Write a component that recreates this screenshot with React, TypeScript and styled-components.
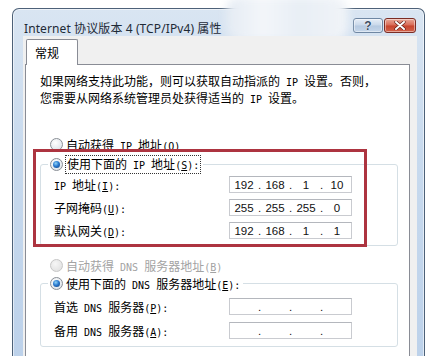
import React from "react";
import styled, { createGlobalStyle } from "styled-components";

const Global = createGlobalStyle`
  html, body { margin: 0; padding: 0; background: #ffffff; }
  body { font-family: "Noto Sans CJK SC", "Noto Sans", sans-serif; overflow: hidden; }
`;

const Stage = styled.div`
  position: relative;
  width: 433px;
  height: 356px;
  overflow: hidden;
  padding-top: 8px;
  padding-left: 12px;
  box-sizing: border-box;
`;

const Window = styled.div`
  position: relative;
  width: 413px;
  height: 360px;
  box-sizing: border-box;
  border: 1px solid #4d6178;
  border-bottom: none;
  border-radius: 7px 7px 0 0;
  background: linear-gradient(180deg, #d9e5f2 0%, #c8daee 40%, #bcd1ea 100%);
  display: flex;
  flex-direction: column;
  box-shadow: inset 0 0 0 1px rgba(255, 255, 255, 0.55);
`;

const TitleBar = styled.div`
  height: 27px;
  display: flex;
  align-items: center;
  padding-left: 11px;
  padding-right: 8px;
  flex: none;
`;

const Title = styled.div`
  flex: 1;
  font-family: "Noto Sans", "Noto Sans CJK SC", sans-serif;
  font-size: 12px;
  color: #1e2a36;
  margin-top: 10px;
  letter-spacing: 0.1px;
  position: relative;
  z-index: 1;
`;

const Blur = styled.div`
  position: absolute;
  left: 213px;
  top: -12px;
  width: 122px;
  height: 44px;
  border-radius: 14px;
  background: linear-gradient(90deg, #e4ebf3 0%, #f3f6fa 30%, #e8eef5 60%, #f1f4f8 100%);
  filter: blur(4px);
  pointer-events: none;
  z-index: 2;
`;

const Buttons = styled.div`
  display: flex;
  gap: 1px;
  align-self: flex-start;
  margin-top: 9px;
`;

const CapButton = styled.div<{ $close?: boolean }>`
  width: ${(p) => (p.$close ? 32 : 30)}px;
  height: 15px;
  box-sizing: border-box;
  border-radius: 3px;
  border: 1px solid ${(p) => (p.$close ? "#7b2d25" : "#6f87a3")};
  background: ${(p) =>
    p.$close
      ? "linear-gradient(180deg, #e9a898 0%, #d86a55 48%, #c7442d 52%, #d2624a 100%)"
      : "linear-gradient(180deg, #e6eef7 0%, #c9d8ea 48%, #b5c9e0 52%, #c5d6ea 100%)"};
  display: flex;
  align-items: center;
  justify-content: center;
  box-shadow: inset 0 0 0 1px rgba(255, 255, 255, 0.45);
`;

const Help = styled.span`
  font-family: "Liberation Sans", sans-serif;
  font-weight: bold;
  font-size: 12px;
  line-height: 12px;
  color: #3b4d63;
  text-shadow: 0 0 1px #fff, 0 0 1px #fff;
`;

const Client = styled.div`
  flex: 1;
  margin: 0 7px 0 10px;
  background: #f0f0f0;
  padding-top: 3px;
  display: flex;
  flex-direction: column;
  position: relative;
  z-index: 3;
`;

const TabStrip = styled.div`
  display: flex;
  padding-left: 3px;
  position: relative;
  z-index: 1;
`;

const Tab = styled.div`
  width: 52px;
  height: 26px;
  box-sizing: border-box;
  border: 1px solid #898c95;
  border-bottom: none;
  background: #ffffff;
  font-size: 12px;
  color: #000;
  padding-left: 8px;
  display: flex;
  align-items: center;
  border-radius: 2px 2px 0 0;
`;

const Page = styled.div`
  position: relative;
  flex: 1;
  margin: -1px 7px 0 2px;
  border: 1px solid #898c95;
  border-bottom: none;
  background: #ffffff;
  display: flex;
  flex-direction: column;
  font-size: 12px;
  color: #000;
`;

const Para = styled.p`
  margin: 8px 0 0 14px;
  line-height: 15px;
  font-size: 12px;
`;

const L = styled.span`
  font-family: "DejaVu Sans Mono", "Liberation Mono", monospace;
  font-size: 10px;
`;

const RadioRow = styled.div<{ $disabled?: boolean; $mt: number }>`
  display: flex;
  align-items: center;
  height: 16px;
  margin-top: ${(p) => p.$mt}px;
  padding-left: 24px;
  gap: 3px;
  color: ${(p) => (p.$disabled ? "#a3a3a3" : "#000")};
  white-space: nowrap;
`;

const Radio = styled.span<{ $checked?: boolean; $disabled?: boolean }>`
  width: 13px;
  height: 13px;
  box-sizing: border-box;
  border-radius: 50%;
  border: 1px solid ${(p) => (p.$disabled ? "#c6c6c6" : "#8a8f96")};
  background: ${(p) =>
    p.$disabled
      ? "radial-gradient(circle at 40% 35%, #f6f6f6, #dcdcdc)"
      : "radial-gradient(circle at 40% 35%, #ffffff, #d6dde5)"};
  display: flex;
  align-items: center;
  justify-content: center;
  flex: none;
  &::after {
    content: "";
    display: ${(p) => (p.$checked ? "block" : "none")};
    width: 7px;
    height: 7px;
    border-radius: 50%;
    background: radial-gradient(circle at 40% 35%, #8fd3f7 0%, #2a7ad0 45%, #0d3d7a 100%);
  }
`;

const Focus = styled.span`
  outline: 1px dotted #333;
  padding: 0 1px;
  line-height: 15px;
`;

const Group = styled.fieldset<{ $mt: number; $pt: number; $pb: number; $gap: number }>`
  margin: ${(p) => p.$mt}px 0 0 14px;
  width: 358px;
  box-sizing: border-box;
  border: 1px solid #d5dfe5;
  border-radius: 3px;
  padding: ${(p) => p.$pt}px 0 ${(p) => p.$pb}px 13px;
  display: flex;
  flex-direction: column;
  gap: ${(p) => p.$gap}px;
  min-width: 0;
`;

const Legend = styled.legend`
  margin-left: -6px;
  padding: 0 3px 0 2px;
  height: 16px;
  display: flex;
  align-items: center;
  gap: 3px;
  white-space: nowrap;
`;

const FieldRow = styled.div`
  display: grid;
  grid-template-columns: 175px 123px;
  align-items: center;
  height: 17px;
`;

const Label = styled.span`
  white-space: nowrap;
`;

const U = styled.span`
  text-decoration: underline;
  text-underline-offset: 1px;
`;

const IpBox = styled.div`
  height: 17px;
  box-sizing: border-box;
  border: 1px solid #c9cbd0;
  border-top-color: #b4b7bd;
  background: #fff;
  display: flex;
  align-items: center;
  padding-left: 2px;
  font-family: "Liberation Sans", sans-serif;
  font-size: 11.5px;
  color: #111;
`;

const Seg = styled.span`
  width: 24px;
  text-align: center;
`;

const Dot = styled.span`
  width: 7px;
  text-align: center;
`;

const RedBox = styled.div`
  position: absolute;
  left: 7px;
  top: 84px;
  width: 334px;
  height: 98px;
  box-sizing: border-box;
  border: 3px solid #ad3440;
  pointer-events: none;
`;

function Ip({ parts }: { parts: string[] }) {
  return (
    <IpBox>
      {parts.map((p, i) => (
        <React.Fragment key={i}>
          {i > 0 && <Dot>.</Dot>}
          <Seg>{p}</Seg>
        </React.Fragment>
      ))}
    </IpBox>
  );
}

function Key({ k, colon }: { k: string; colon?: boolean }) {
  return (
    <L>
      (<U>{k}</U>){colon ? ":" : ""}
    </L>
  );
}

export default function App() {
  return (
    <>
      <Global />
      <Stage>
        <Window>
          <TitleBar>
            <Title>Internet 协议版本 4 (TCP/IPv4) 属性</Title>
            <Buttons>
              <CapButton>
                <Help>?</Help>
              </CapButton>
              <CapButton $close>
                <svg width="12" height="9" viewBox="0 0 12 9">
                  <path d="M2 1 L10 8 M10 1 L2 8" stroke="#5a1a12" strokeWidth="3.2" strokeLinecap="round" />
                  <path d="M2 1 L10 8 M10 1 L2 8" stroke="#ffffff" strokeWidth="2" strokeLinecap="round" />
                </svg>
              </CapButton>
            </Buttons>
          </TitleBar>
          <Blur />
          <Client>
            <TabStrip>
              <Tab>常规</Tab>
            </TabStrip>
            <Page>
              <Para>
                如果网络支持此功能，则可以获取自动指派的<L> IP </L>设置。否则，
                <br />
                您需要从网络系统管理员处获得适当的<L> IP </L>设置。
              </Para>
              <RadioRow $mt={29}>
                <Radio />
                <span>
                  自动获得<L> IP </L>地址<Key k="O" />
                </span>
              </RadioRow>
              <Group $mt={4} $pt={4} $pb={6} $gap={6}>
                <Legend>
                  <Radio $checked />
                  <Focus>
                    使用下面的<L> IP </L>地址<Key k="S" colon />
                  </Focus>
                </Legend>
                <FieldRow>
                  <Label>
                    <L>IP </L>地址<Key k="I" colon />
                  </Label>
                  <Ip parts={["192", "168", "1", "10"]} />
                </FieldRow>
                <FieldRow>
                  <Label>
                    子网掩码<Key k="U" colon />
                  </Label>
                  <Ip parts={["255", "255", "255", "0"]} />
                </FieldRow>
                <FieldRow>
                  <Label>
                    默认网关<Key k="D" colon />
                  </Label>
                  <Ip parts={["192", "168", "1", "1"]} />
                </FieldRow>
              </Group>
              <RadioRow $mt={11} $disabled>
                <Radio $disabled />
                <span>
                  自动获得<L> DNS </L>服务器地址<Key k="B" />
                </span>
              </RadioRow>
              <Group $mt={2} $pt={7} $pb={7} $gap={7}>
                <Legend>
                  <Radio $checked />
                  <span>
                    使用下面的<L> DNS </L>服务器地址<Key k="E" colon />
                  </span>
                </Legend>
                <FieldRow>
                  <Label>
                    首选<L> DNS </L>服务器<Key k="P" colon />
                  </Label>
                  <Ip parts={["", "", "", ""]} />
                </FieldRow>
                <FieldRow>
                  <Label>
                    备用<L> DNS </L>服务器<Key k="A" colon />
                  </Label>
                  <Ip parts={["", "", "", ""]} />
                </FieldRow>
              </Group>
              <RedBox />
            </Page>
          </Client>
        </Window>
      </Stage>
    </>
  );
}
